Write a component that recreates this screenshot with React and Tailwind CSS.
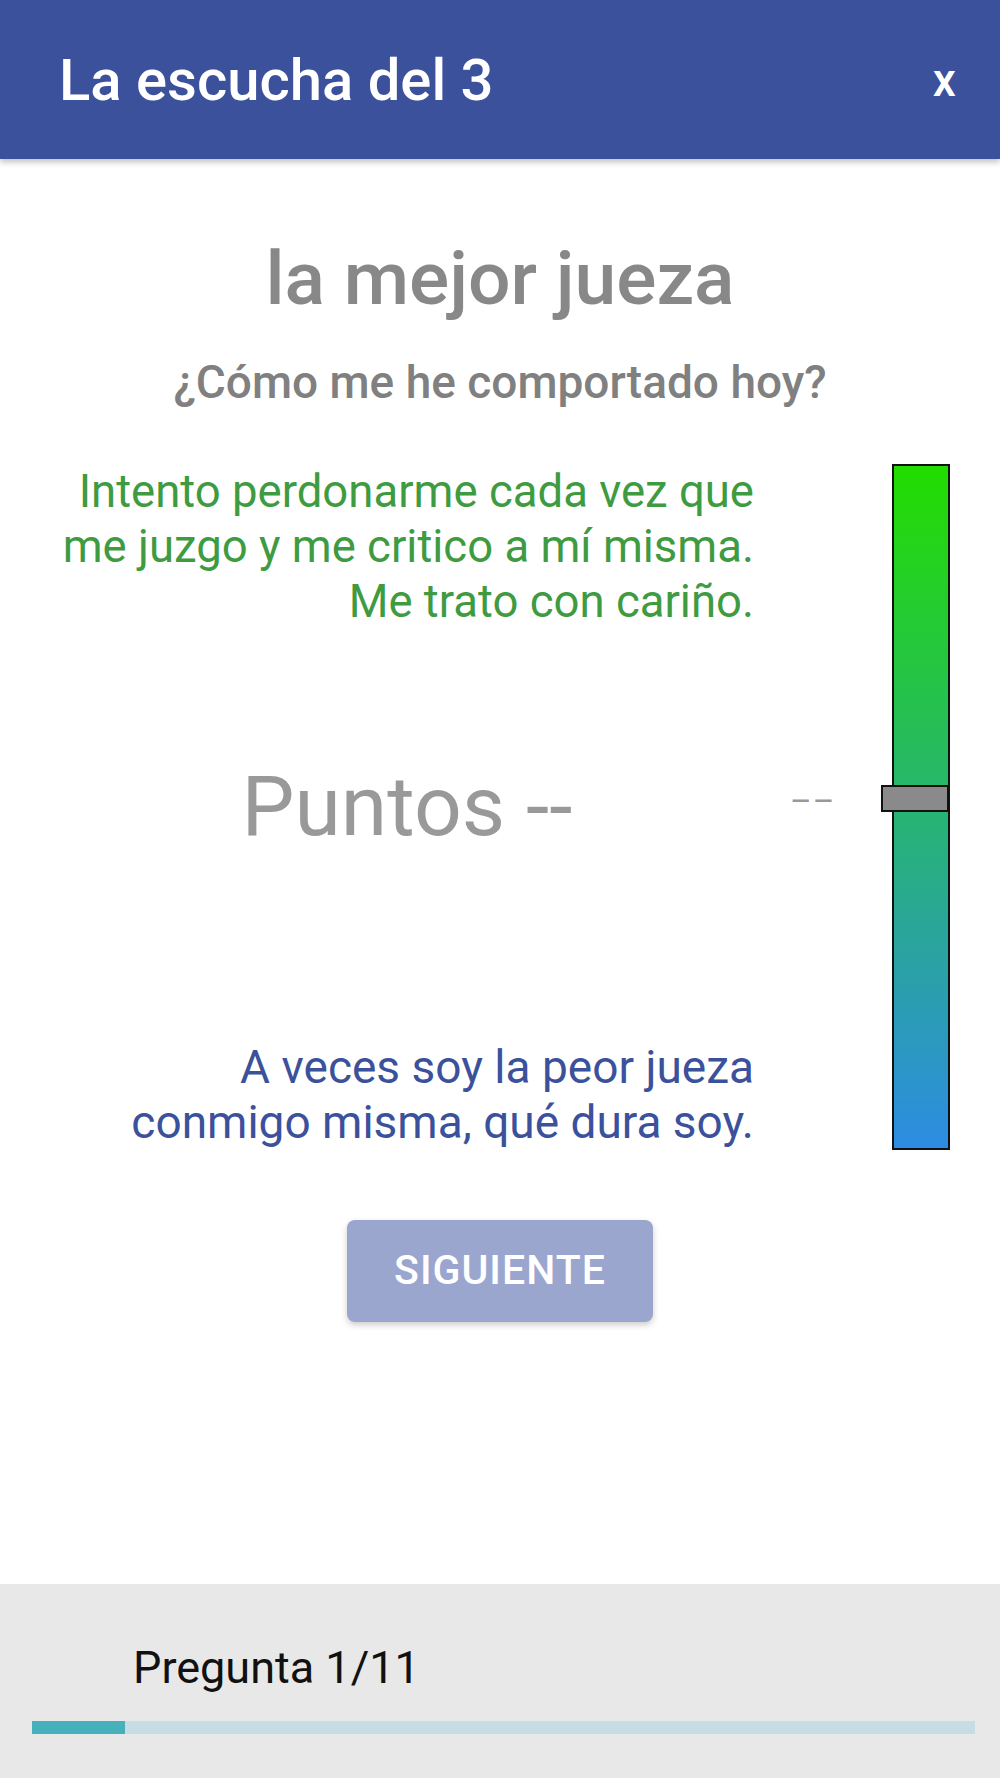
import React from 'react';

const font = { fontFamily: 'Roboto, "Noto Sans", sans-serif' };

const Slider = () => (
    <div className="relative w-[58px] h-[686px] shrink-0">
        <div className="w-full h-full border-2 border-[#111] bg-[linear-gradient(to_bottom,#22dd00,#2d8ce2)]"></div>
        {/* thumb */}
        <div className="absolute left-[-11px] right-[1px] top-[321px] h-[27px] bg-[#8a8a8a] border-2 border-[#111]"></div>
    </div>
);

const App = () => {
    return (
        <div className="w-[1000px] h-[1778px] flex flex-col bg-white" style={font}>
            {/* header */}
            <div className="h-[159px] shrink-0 bg-[#3b519b] flex items-center justify-between pl-[59px] pr-[44px] shadow-[0_3px_6px_rgba(0,0,0,0.25)] z-10">
                <h1 className="text-white text-[58px] font-medium leading-none">La escucha del 3</h1>
                <button className="text-white text-[46px] font-medium leading-none">x</button>
            </div>

            <div className="flex-1 flex flex-col">
                <h2 className="mt-[74px] text-center text-[75px] leading-[90px] font-medium text-[#888888]">la mejor jueza</h2>
                <p className="mt-[32px] text-center text-[46px] leading-[54px] font-medium text-[#808080]">¿Cómo me he comportado hoy?</p>

                <div className="mt-[55px] flex pl-[60px] pr-[50px]">
                    <div className="w-[694px] h-[686px] grid grid-rows-[1fr_auto_1fr]">
                        <p className="self-start text-right whitespace-nowrap text-[45.5px] leading-[55px] text-[#3f9b41]">
                            Intento perdonarme cada vez que<br />me juzgo y me critico a mí misma.<br />Me trato con cariño.
                        </p>
                        <p className="text-center text-[84px] leading-[100px] text-[#999999]">Puntos --</p>
                        <p className="self-end text-right whitespace-nowrap text-[46px] leading-[55px] text-[#3b519b]">
                            A veces soy la peor jueza<br />conmigo misma, qué dura soy.
                        </p>
                    </div>
                    <div className="flex-1 flex">
                        <div className="flex-1 h-[686px] flex items-center">
                            <span className="ml-[36px] -mt-[12px] text-[33px] leading-none tracking-[1px] text-[#999999]">––</span>
                        </div>
                        <Slider />
                    </div>
                </div>

                <div className="mt-[70px] flex justify-center">
                    <button className="w-[306px] h-[102px] rounded-[8px] bg-[#9ba6cf] text-white text-[41px] font-medium tracking-wide shadow-[0_3px_6px_rgba(0,0,0,0.2)]">
                        SIGUIENTE
                    </button>
                </div>
            </div>

            {/* footer */}
            <div className="h-[194px] shrink-0 bg-[#e8e8e8] flex flex-col pt-[56px] pl-[32px] pr-[25px]">
                <p className="pl-[101px] text-[45px] leading-[56px] text-[#111]">Pregunta 1/11</p>
                <div className="mt-[25px] h-[13px] bg-[#c6dde1]">
                    <div className="h-full w-[93px] bg-[#46b0bb]"></div>
                </div>
            </div>
        </div>
    );
};

export default App;
